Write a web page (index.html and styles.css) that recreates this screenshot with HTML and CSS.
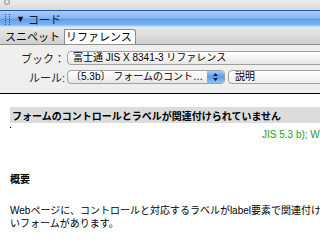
FILE: index.html
```html
<!DOCTYPE html>
<html>
<head lang="ja">
  <meta charset="UTF-8">
  <title>コード</title>
  <link rel="stylesheet" href="styles.css">
</head>
<body>
  <div class="titlebar">
    <svg class="knob" width="8" height="8" viewBox="0 0 8 8"><circle cx="4" cy="2" r="2.5" fill="none" stroke="#8a8a8a" stroke-width="1"/></svg>
  </div>
  <div class="sectionbar">
    <span class="grip"></span>
    <span class="disclosure">&#9660;</span>
    <span class="sectionTitle">コード</span>
  </div>
  <div class="tabs">
    <span class="tab">スニペット</span>
    <span class="tab tabActive">リファレンス</span>
  </div>
  <div class="form">
    <div class="row">
      <span class="label">ブック：</span>
      <div class="popup popupBook">富士通 JIS X 8341-3 リファレンス</div>
    </div>
    <div class="row">
      <span class="label">ルール:</span>
      <div class="popup popupRule">
        <span class="popupText">〔5.3b〕 フォームのコント…</span>
        <span class="stepper">
          <svg width="7" height="10" viewBox="0 0 7 10"><path d="M3.5 1 L6 4 L1 4 Z M3.5 9 L6 6 L1 6 Z" fill="#102040"/></svg>
        </span>
      </div>
      <div class="field">説明</div>
    </div>
  </div>
  <div class="content">
    <h1 class="heading">フォームのコントロールとラベルが関連付けられていません</h1>
    <span class="dot"></span>
    <p class="refs">JIS 5.3 b); WCAG 1.0 12.4</p>
    <h2 class="subheading">概要</h2>
    <p class="text">Webページに、コントロールと対応するラベルがlabel要素で関連付けられていないフォームがあります。</p>
  </div>
</body>
</html>
```

FILE: styles.css
```css
body {
  margin: 0;
  width: 320px;
  height: 240px;
  overflow: hidden;
  background: #fff;
  font-family: "Liberation Sans", "Noto Sans CJK JP", sans-serif;
  font-size: 11px;
  color: #000;
}
.titlebar {
  height: 10px;
  background: linear-gradient(#ececec, #d9d9d9);
}
.knob {
  display: block;
  margin-left: 3px;
}
.sectionbar {
  height: 16px;
  border-top: 1px solid #24589f;
  background: linear-gradient(#a9cdf6, #86b6ee 45%, #5f9ce6 50%, #79b4f2 85%, #c2ecff);
  display: flex;
  align-items: center;
  padding-left: 5px;
}
.grip {
  width: 3px;
  height: 11px;
  border-left: 1px dotted #30507a;
  border-right: 1px dotted #30507a;
  margin-right: 6px;
}
.disclosure {
  font-size: 9px;
  color: #000;
  margin-right: 3px;
}
.sectionTitle {
  font-size: 11px;
  color: #0c1d3a;
}
.tabs {
  height: 17px;
  background: linear-gradient(#e9e9e9, #cfcfcf);
  border-bottom: 1px solid #8f8f8f;
  display: flex;
  align-items: flex-end;
  padding-left: 5px;
}
.tab {
  height: 14px;
  line-height: 14px;
  font-size: 11px;
  padding-right: 3px;
}
.tabActive {
  background: #fff;
  border: 1px solid #8a8a8a;
  border-bottom: none;
  border-radius: 0 3px 0 0;
  padding: 0 3px 0 1px;
  margin-left: 1px;
}
.form {
  background: #efefef;
  height: 42px;
  padding-top: 6px;
  display: flex;
  flex-direction: column;
  gap: 5px;
}
.row {
  display: flex;
  align-items: center;
  height: 14px;
}
.label {
  width: 65px;
  text-align: right;
  font-size: 11px;
  color: #222;
  flex-shrink: 0;
}
.popup {
  height: 12px;
  line-height: 12px;
  border: 1px solid #a0a0a0;
  border-radius: 4px;
  background: linear-gradient(#ffffff, #f4f4f4 50%, #e6e6e6);
  font-size: 10px;
  padding-left: 5px;
  margin-left: 2px;
  white-space: nowrap;
  box-sizing: content-box;
}
.popupBook {
  width: 300px;
  flex-shrink: 0;
}
.popupRule {
  width: 153px;
  display: flex;
  padding-left: 3px;
  flex-shrink: 0;
  overflow: hidden;
}
.popupText {
  flex: 1;
  overflow: hidden;
}
.stepper {
  width: 17px;
  height: 12px;
  border-radius: 0 3px 3px 0;
  background: linear-gradient(#a6cdf7, #5a9be6 50%, #8fc4f5);
  display: flex;
  align-items: center;
  justify-content: center;
}
.field {
  height: 12px;
  line-height: 12px;
  border: 1px solid #a0a0a0;
  border-radius: 4px 0 0 4px;
  background: linear-gradient(#ffffff, #eeeeee);
  font-size: 10px;
  padding-left: 6px;
  margin-left: 3px;
  width: 120px;
  flex-shrink: 0;
}
.content {
  border-top: 1px solid #000;
  width: 370px;
  padding-left: 10px;
  padding-top: 13px;
}
.heading {
  margin: 0;
  background: #dcdcdc;
  height: 16px;
  font-size: 10px;
  line-height: 10px;
  padding-top: 5px;
  box-sizing: border-box;
  padding-left: 2px;
  font-weight: bold;
}
.dot {
  display: block;
  width: 1px;
  height: 1px;
  background: #000;
  margin-top: 4px;
}
.refs {
  margin: 1px 0 0 252px;
  color: #2a9a2a;
  font-size: 10px;
  line-height: 12px;
  white-space: nowrap;
}
.subheading {
  margin: 33px 0 0;
  font-size: 10px;
  line-height: 12px;
  font-weight: bold;
}
.text {
  margin: 18px 0 0;
  font-size: 10px;
  line-height: 13px;
}
```
